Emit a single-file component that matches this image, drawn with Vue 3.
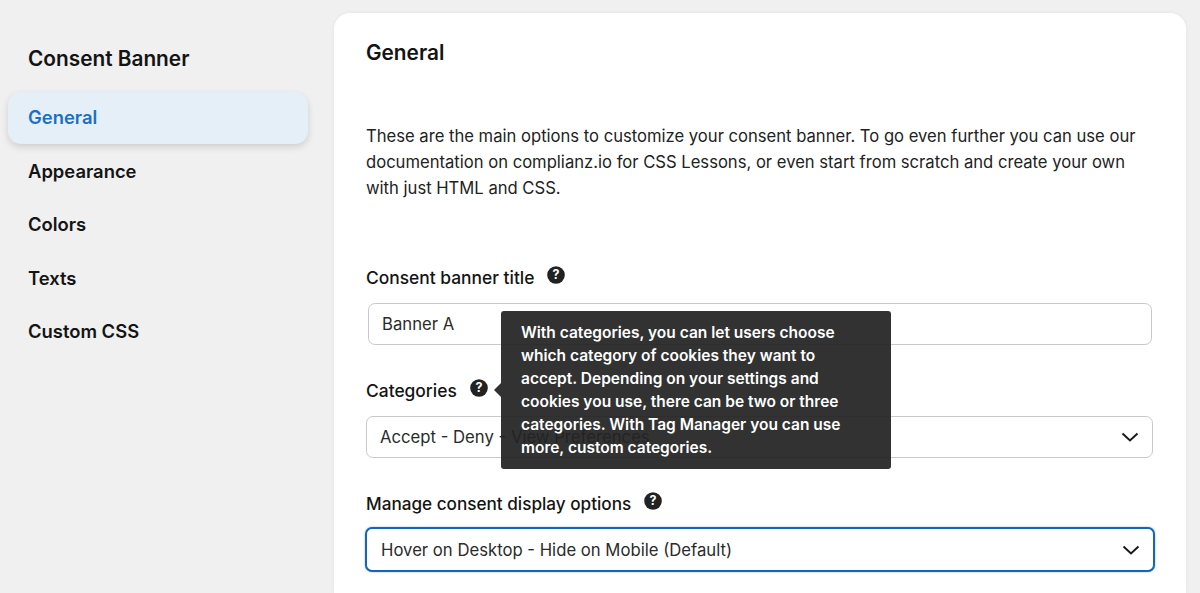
<script setup>
const navItems = ['General', 'Appearance', 'Colors', 'Texts', 'Custom CSS']
const tooltipLines = [
  'With categories, you can let users choose',
  'which category of cookies they want to',
  'accept. Depending on your settings and',
  'cookies you use, there can be two or three',
  'categories. With Tag Manager you can use',
  'more, custom categories.'
]
</script>

<template>
  <div class="page">
    <aside class="sidebar">
      <h2 class="side-title">Consent Banner</h2>
      <nav class="nav">
        <a v-for="(item, i) in navItems" :key="item" class="nav-item" :class="{ active: i === 0 }">{{ item }}</a>
      </nav>
    </aside>
    <main class="panel">
      <h1 class="panel-title">General</h1>
      <p class="intro">These are the main options to customize your consent banner. To go even further you can use our<br>documentation on complianz.io for CSS Lessons, or even start from scratch and create your own<br>with just HTML and CSS.</p>

      <section class="field first">
        <div class="label-row">
          <label>Consent banner title</label>
          <svg class="help" viewBox="0 0 18 18"><circle cx="9" cy="9" r="8.8" fill="#222"/><text x="9" y="13" text-anchor="middle" class="q">?</text></svg>
        </div>
        <div class="control input">Banner A</div>
      </section>

      <section class="field second">
        <div class="label-row">
          <label>Categories</label>
          <svg class="help" viewBox="0 0 18 18"><circle cx="9" cy="9" r="8.8" fill="#222"/><text x="9" y="13" text-anchor="middle" class="q">?</text></svg>
        </div>
        <div class="control select wide">
          <span>Accept - Deny - View Preferences</span>
          <svg class="chev" viewBox="0 0 18 10"><path d="M1.5 1.5 9 8.5l7.5-7" fill="none" stroke="#1a1a1a" stroke-width="2"/></svg>
        </div>
      </section>

      <section class="field third">
        <div class="label-row">
          <label>Manage consent display options</label>
          <svg class="help" viewBox="0 0 18 18"><circle cx="9" cy="9" r="8.8" fill="#222"/><text x="9" y="13" text-anchor="middle" class="q">?</text></svg>
        </div>
        <div class="control select focused">
          <span>Hover on Desktop - Hide on Mobile (Default)</span>
          <svg class="chev" viewBox="0 0 18 10"><path d="M1.5 1.5 9 8.5l7.5-7" fill="none" stroke="#1a1a1a" stroke-width="2"/></svg>
        </div>
      </section>

      <div class="tooltip">
        <span class="arrow"></span>
        <div v-for="line in tooltipLines" :key="line">{{ line }}</div>
      </div>
    </main>
  </div>
</template>

<style>
html, body { margin: 0; background: #f0f0f0; overflow: hidden; }
</style>

<style scoped>
.page {
  display: flex;
  height: 593px;
  overflow: hidden;
  background: #f0f0f0;
  font-family: Inter, "Liberation Sans", sans-serif;
  color: #141414;
}
.sidebar {
  width: 334px;
  flex: none;
  box-sizing: border-box;
  padding: 46px 26px 0 8px;
}
.side-title {
  margin: 0 0 21px 20px;
  font-size: 20.8px;
  line-height: 25px;
  font-weight: 600;
}
.nav { display: flex; flex-direction: column; gap: 1.5px; }
.nav-item {
  display: block;
  height: 52px;
  line-height: 51px;
  padding-left: 20px;
  font-size: 18.4px;
  font-weight: 600;
  border-radius: 13px;
}
.nav-item.active {
  background: #e5eff8;
  color: #1e6fc0;
  box-shadow: 0 3px 7px rgba(0, 0, 0, 0.14);
}
.panel {
  position: relative;
  width: 852px;
  flex: none;
  margin-top: 13px;
  box-sizing: border-box;
  padding: 27px 32px 0;
  background: #fff;
  border-radius: 16px 16px 0 0;
  box-shadow: 0 0 4px rgba(0, 0, 0, 0.05);
}
.panel-title {
  margin: 0;
  font-size: 20.8px;
  line-height: 25px;
  font-weight: 600;
}
.intro {
  margin: 58px 0 0;
  font-size: 16.63px;
  line-height: 26px;
  color: #222;
}
.field.first { margin-top: 62px; }
.field.second { margin-top: 31px; }
.field.third { margin-top: 31px; }
.label-row {
  display: flex;
  align-items: center;
  height: 28px;
  margin-bottom: 12px;
}
label {
  font-size: 17.4px;
  font-weight: 500;
}
.third label { font-size: 17.15px; }
.help { width: 18px; height: 18px; margin: -4px 0 0 13px; }
.q { font: 700 12.5px Inter, sans-serif; fill: #fff; }
.control {
  box-sizing: border-box;
  height: 42px;
  display: flex;
  align-items: center;
  justify-content: space-between;
  border: 1px solid #c9c9c9;
  border-radius: 7px;
  font-size: 16.7px;
  color: #2b2b2b;
  background: #fff;
}
.input { margin-left: 2px; width: 784px; padding-left: 13px; }
.select { padding: 0 13px 0 13px; }
.wide { width: 787px; }
.focused {
  width: 790px;
  height: 45px;
  margin: -2px 0 0 -1px;
  border: 2px solid #1566b7;
  padding: 0 13px 0 14px;
  box-shadow: 0 0 2px rgba(21, 102, 183, 0.5);
}
.chev { width: 18px; height: 10px; }
.tooltip {
  position: absolute;
  left: 167px;
  top: 298px;
  width: 390px;
  height: 158px;
  box-sizing: border-box;
  padding: 10px 0 0 20px;
  background: rgba(34, 34, 34, 0.93);
  border-radius: 3px;
  color: #fff;
  font-size: 15.5px;
  font-weight: 600;
  line-height: 23px;
  white-space: nowrap;
}
.arrow {
  position: absolute;
  left: -7px;
  top: 72px;
  width: 7px;
  height: 14px;
  background: rgba(34, 34, 34, 0.93);
  clip-path: polygon(100% 0, 0 50%, 100% 100%);
}
</style>
